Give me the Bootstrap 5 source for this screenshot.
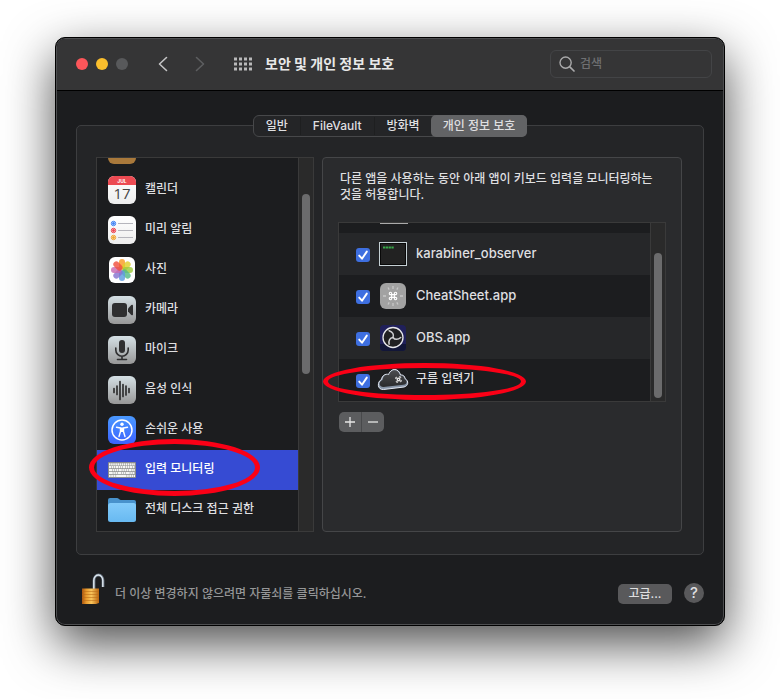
<!DOCTYPE html>
<html lang="ko">
<head>
<meta charset="utf-8">
<meta name="viewport" content="width=device-width, initial-scale=1">
<title>보안 및 개인 정보 보호</title>
<link href="https://cdn.jsdelivr.net/npm/bootstrap@5.3.0/dist/css/bootstrap.min.css" rel="stylesheet">
<style>
  body { font-family: Inter, "Noto Sans CJK KR", sans-serif; font-size: 12px; line-height: 16px; font-weight: 500; color: #dfdfe0; background: #fff; padding: 37px 55px 32px; min-height: 100vh; }
  button, input { font: inherit; }
  svg { display: block; flex: none; }
  .prefs-window { background: #1c1d1f; border: 1px solid #000; border-radius: 10px; box-shadow: inset 0 0 0 1px #4d4e50, 0 18px 50px rgba(0,0,0,.7); padding: 1px; }
  .title-bar { height: 52px; background: #353536; border-bottom: 1px solid #000; border-radius: 8px 8px 0 0; padding: 0 11px 2px 19px; }
  .title-bar h1 { font-size: 14px; line-height: 20px; font-weight: 700; margin: 0 0 0 13px; color: #e8e8e8; }
  .plain-btn { background: none; border: 0; padding: 0; color: inherit; }
  .dot { width: 12px; height: 12px; border-radius: 50%; }
  .dot-red { background: #fc565a; } .dot-yellow { background: #fbbf2d; } .dot-gray { background: #58595b; }
  .nav-btn { width: 37px; height: 28px; display: flex; align-items: center; justify-content: center; }
  .search-box { width: 162px; height: 28px; border: 1px solid #434446; border-radius: 6px; padding: 0 8px; gap: 5px; }
  .search-box input { background: none; border: 0; outline: 0; padding: 0; min-width: 0; color: #ddd; }
  .search-box input::placeholder { color: #6f7072; opacity: 1; }
  .pane { padding: 24px 19px 19px; }
  .segments { position: relative; z-index: 1; height: 22px; margin-bottom: -12px; background: #242527; border: 1px solid #47484a; border-radius: 6px; }
  .segments button { padding: 0 12px; border-right: 1px solid #1e1f20; line-height: 18px; margin: 1px 0; }
  .segments button:last-child, .segments button.before-active { border-right: 0; }
  .segments button.selected { background: #626365; border-radius: 5px; margin: -1px; line-height: 20px; }
  .group-box { background: #242527; border: 1px solid #3d3e40; border-radius: 5px; padding: 31px 21px 22px 19px; gap: 8px; }
  .category-list { width: 218px; }
  .scroll-frame { border: 1px solid #3a3a3a; background: #1c1d1f; }
  .category-view { height: 373px; padding-bottom: 1px; }
  .category { height: 40px; flex: none; padding: 0 11px; gap: 9px; color: inherit; text-decoration: none; }
  .category span, .app-row label { padding-bottom: 2px; }
  .category.selected { background: #364bd3; color: #fff; }
  .track { width: 15px; background: #2a2a2a; border-left: 1px solid #3a3a3a; padding: 0 3px; }
  .thumb { width: 8px; border-radius: 4px; background: #6b6b6c; }
  .category-thumb { height: 180px; margin-top: 36px; }
  .app-thumb { height: 145px; margin-top: 30px; }
  .detail { min-width: 0; background: #2a2b2d; border: 1px solid #454648; border-radius: 4px; padding: 13px 15px 16px; }
  .detail p { margin: 0 1px 19px 2px; }
  .app-view { height: 178px; }
  .app-row { height: 42px; flex: none; padding-left: 17px; gap: 9px; }
  .app-row:nth-child(even) { background: #262729; }
  .app-row label { font-size: 13px; }
  .app-row label.hangul { font-size: 12px; }
  .app-row input { appearance: none; width: 14px; height: 14px; margin: 1px 0 0; border-radius: 3px; background: #4a4b4d; flex: none; }
  .app-row input:checked { background: #3e6fe0 url("data:image/svg+xml,%3Csvg xmlns='http://www.w3.org/2000/svg' viewBox='0 0 14 14'%3E%3Cpath d='M3.2 7.6 6 10.7 10.8 3.6' fill='none' stroke='white' stroke-width='1.9' stroke-linecap='round' stroke-linejoin='round'/%3E%3C/svg%3E"); }
  .edit-btns { margin: 10px 0 0 1px; height: 20px; background: #5c5d5f; border-radius: 5px; }
  .edit-btns button { width: 22px; display: flex; align-items: center; justify-content: center; }
  .edit-btns button + button { border-left: 1px solid #48494b; width: 23px; }
  .mark-ring { position: absolute; pointer-events: none; border: 5px solid #fb0016; border-radius: 50%; }
  .ring-category { left: -7px; right: 54px; bottom: 36px; height: 57px; }
  .ring-app { left: -15px; width: 203px; bottom: 2px; height: 37px; }
  .footer-row { margin-top: 18px; padding-left: 5px; }
  .footer-text { color: #959697; margin: 10px 0 0 10px; }
  .advanced { background: #59595b; border-radius: 5px; height: 20px; width: 54px; margin: 9px 12px 0 0; line-height: 18px; }
  .help { width: 20px; height: 20px; border-radius: 50%; background: #59595b; font-size: 15px; line-height: 20px; margin-top: 8px; }
</style>
<script src="https://cdn.jsdelivr.net/npm/bootstrap@5.3.0/dist/js/bootstrap.bundle.min.js"></script>
</head>
<body>
<svg width="0" height="0" class="position-absolute" aria-hidden="true">
  <defs>
    <linearGradient id="silver" x1="0" y1="0" x2="0" y2="1"><stop stop-color="#d5e0e5"/><stop offset="1" stop-color="#979797"/></linearGradient>
    <linearGradient id="paper" x1="0" y1="0" x2="0" y2="1"><stop stop-color="#fff"/><stop offset="1" stop-color="#ededed"/></linearGradient>
    <linearGradient id="blue" x1="0" y1="0" x2="0" y2="1"><stop stop-color="#4a99ff"/><stop offset="1" stop-color="#3c62ff"/></linearGradient>
    <linearGradient id="folder" x1="0" y1="0" x2="0" y2="1"><stop stop-color="#83cbfa"/><stop offset="1" stop-color="#68b9f1"/></linearGradient>
    <linearGradient id="gold" x1="0" y1="0" x2="1" y2="0"><stop stop-color="#a85410"/><stop offset=".25" stop-color="#e89a2c"/><stop offset=".55" stop-color="#f9c45b"/><stop offset="1" stop-color="#b9640f"/></linearGradient>
    <linearGradient id="cloudFill" x1="0" y1="0" x2="0" y2="1"><stop stop-color="#4b4c4f"/><stop offset="1" stop-color="#292a2c"/></linearGradient>
    <path id="cmd" d="M-1.6-1.6h3.2v3.2h-3.2zM-1.6-1.6h-1.4a1.4 1.4 0 1 1 1.4-1.4zM1.6-1.6v-1.4a1.4 1.4 0 1 1 1.4 1.4zM1.6 1.6h1.4a1.4 1.4 0 1 1-1.4 1.4zM-1.6 1.6v1.4a1.4 1.4 0 1 1-1.4-1.4z" fill="none"/>
    <path id="blade" d="M14 13.5c2-2.500 1-5.500-2-7.500" fill="none"/>
  </defs>
</svg>

<main class="prefs-window">
  <header class="title-bar d-flex align-items-center">
    <div class="d-flex gap-2">
      <button class="plain-btn dot dot-red" aria-label="닫기"></button>
      <button class="plain-btn dot dot-yellow" aria-label="최소화"></button>
      <button class="plain-btn dot dot-gray" aria-label="확대" disabled></button>
    </div>
    <div class="d-flex ms-3 me-3">
      <button class="plain-btn nav-btn" aria-label="뒤로"><svg width="11" height="16" viewBox="0 0 11 16"><path d="M9.500 1.500 2.500 8 9.500 14.500" fill="none" stroke="#c4c4c5" stroke-width="1.600" stroke-linecap="round" stroke-linejoin="round"/></svg></button>
      <button class="plain-btn nav-btn" aria-label="앞으로" disabled><svg width="11" height="16" viewBox="0 0 11 16"><path d="M2.500 1.500 9.500 8 2.500 14.500" fill="none" stroke="#5d5e60" stroke-width="1.600" stroke-linecap="round" stroke-linejoin="round"/></svg></button>
    </div>
    <button class="plain-btn" aria-label="모두 보기"><svg width="18" height="14" viewBox="0 0 18 14"><path d="M0 2h18M0 7h18M0 12h18" stroke="#b9b9ba" stroke-width="3" stroke-dasharray="3 2"/></svg></button>
    <h1>보안 및 개인 정보 보호</h1>
    <div class="search-box d-flex align-items-center ms-auto">
      <svg width="16" height="16" viewBox="0 0 16 16"><circle cx="6.6" cy="6.6" r="5.6" fill="none" stroke="#aaaaab" stroke-width="1.4"/><path d="m10.8 10.8 4.2 4.2" stroke="#aaaaab" stroke-width="1.7" stroke-linecap="round"/></svg>
      <input class="flex-grow-1" type="text" placeholder="검색" aria-label="검색">
    </div>
  </header>

  <div class="pane">
    <div class="d-flex justify-content-center">
      <div class="segments d-flex" role="tablist">
        <button class="plain-btn" role="tab">일반</button>
        <button class="plain-btn" role="tab">FileVault</button>
        <button class="plain-btn before-active" role="tab">방화벽</button>
        <button class="plain-btn selected" role="tab" aria-selected="true">개인 정보 보호</button>
      </div>
    </div>

    <section class="group-box d-flex">
      <div class="category-list position-relative flex-shrink-0">
        <div class="scroll-frame d-flex">
          <nav class="category-view flex-grow-1 d-flex flex-column justify-content-end overflow-hidden" aria-label="카테고리">
            <a href="#" class="category d-flex align-items-center" aria-label="연락처"><svg width="28" height="28"><rect width="28" height="28" rx="6" fill="#a9793b"/></svg></a>
            <a href="#" class="category d-flex align-items-center">
              <svg width="28" height="28" viewBox="0 0 28 28"><rect width="28" height="28" rx="6" fill="url(#paper)"/><path d="M0 9V6a6 6 0 0 1 6-6h16a6 6 0 0 1 6 6v3z" fill="#ec4a52"/><text x="14" y="7" text-anchor="middle" font-size="5" font-weight="700" fill="#fff">JUL</text><text x="14" y="23" text-anchor="middle" font-family="Open Sans" font-size="15" font-weight="400" fill="#444">17</text></svg>
              <span>캘린더</span></a>
            <a href="#" class="category d-flex align-items-center">
              <svg width="28" height="28" viewBox="0 0 28 28"><rect width="28" height="28" rx="6" fill="url(#paper)"/><path d="M10 7.5h15M10 14.5h15M10 21.5h15" stroke="#b5b5bc"/><g stroke-width="1" fill="none"><g stroke="#3c80f5"><circle cx="5.5" cy="7.5" r="2.2"/><circle cx="5.5" cy="7.5" r="1" fill="#3c80f5"/></g><g stroke="#ef3f4b"><circle cx="5.5" cy="14.5" r="2.2"/><circle cx="5.5" cy="14.5" r="1" fill="#ef3f4b"/></g><g stroke="#f2a229"><circle cx="5.5" cy="21.5" r="2.2"/><circle cx="5.5" cy="21.5" r="1" fill="#f2a229"/></g></g></svg>
              <span>미리 알림</span></a>
            <a href="#" class="category d-flex align-items-center">
              <svg width="28" height="28" viewBox="0 0 28 28"><rect x="1" y="1" width="26" height="26" rx="6" fill="#fff"/><g fill-opacity=".82"><rect x="11" y="3" width="6" height="10.5" rx="3" fill="#f99b25"/><rect x="11" y="3" width="6" height="10.5" rx="3" fill="#dfd02d" transform="rotate(45 14 14)"/><rect x="11" y="3" width="6" height="10.5" rx="3" fill="#9dca3c" transform="rotate(90 14 14)"/><rect x="11" y="3" width="6" height="10.5" rx="3" fill="#55bb86" transform="rotate(135 14 14)"/><rect x="11" y="3" width="6" height="10.5" rx="3" fill="#5d9ce0" transform="rotate(180 14 14)"/><rect x="11" y="3" width="6" height="10.5" rx="3" fill="#8675cf" transform="rotate(225 14 14)"/><rect x="11" y="3" width="6" height="10.5" rx="3" fill="#c86bb2" transform="rotate(270 14 14)"/><rect x="11" y="3" width="6" height="10.5" rx="3" fill="#f0503e" transform="rotate(315 14 14)"/></g></svg>
              <span>사진</span></a>
            <a href="#" class="category d-flex align-items-center">
              <svg width="28" height="28" viewBox="0 0 28 28"><rect width="28" height="28" rx="6" fill="url(#silver)"/><rect x="4" y="7" width="15" height="14" rx="3" fill="#2f2f30"/><path d="M20 12.5 23.3 9q1.7-1 1.7.8v8.4q0 1.800-1.700.800L20 15.500z" fill="#2f2f30"/></svg>
              <span>카메라</span></a>
            <a href="#" class="category d-flex align-items-center">
              <svg width="28" height="28" viewBox="0 0 28 28"><rect width="28" height="28" rx="6" fill="url(#silver)"/><rect x="11" y="4" width="6" height="13" rx="3" fill="#2f2f30"/><path d="M7.800 12v2a6.200 6.200 0 0 0 12.400 0v-2M14 20.500v3M9.500 23.500h9" fill="none" stroke="#2f2f30" stroke-width="1.600" stroke-linecap="round"/></svg>
              <span>마이크</span></a>
            <a href="#" class="category d-flex align-items-center">
              <svg width="28" height="28" viewBox="0 0 28 28"><rect width="28" height="28" rx="6" fill="url(#silver)"/><path d="M6 12.500v4M9 10v8.500M12 5.500v18M15 8.500v12M18 10v9M21 12.500v4" stroke="#2f2f30" stroke-width="1.700" stroke-linecap="round"/></svg>
              <span>음성 인식</span></a>
            <a href="#" class="category d-flex align-items-center">
              <svg width="28" height="28" viewBox="0 0 28 28"><rect width="28" height="28" rx="6" fill="url(#blue)"/><circle cx="14" cy="14" r="10" fill="none" stroke="#fff" stroke-width="1.500"/><circle cx="14" cy="8.300" r="1.700" fill="#fff"/><path d="M8.500 11.300 12.500 12v3.500L11 20.500M19.500 11.300 15.500 12v3.500L17 20.500" fill="none" stroke="#fff" stroke-width="1.400" stroke-linecap="round" stroke-linejoin="round"/><path d="M12.300 11.500h3.400v4.500h-3.400z" fill="#fff"/></svg>
              <span>손쉬운 사용</span></a>
            <a href="#" class="category selected d-flex align-items-center" aria-current="true">
              <svg width="28" height="28" viewBox="0 0 28 28"><rect y="6" width="28" height="16" rx="1" fill="#8b8c8c"/><g stroke="#f6f6f4" stroke-width="2.200" fill="none"><path d="M1 8.300h26" stroke-dasharray="1.600 .500"/><path d="M1 11.200h26" stroke-dasharray="2.500 .500 1.500 .500 1.500 .500"/><path d="M1 14.100h26" stroke-dasharray="3 .500 1.600 .500 1.600 .500 1.600 .500"/><path d="M1 17h26" stroke-dasharray="3.800 .500 1.600 .500 1.600 .500"/><path d="M1 19.900h26" stroke-dasharray="1.700 .500 1.700 .500 2.200 .500 10.500 .500 1.700 .500 1.700 .500 2 .500"/></g></svg>
              <span>입력 모니터링</span></a>
            <a href="#" class="category d-flex align-items-center">
              <svg width="28" height="28" viewBox="0 0 28 28"><path d="M0 10V4q0-2 2-2h7q1 0 2 1t2 1h13q2 0 2 2v6H0z" fill="#4892cc"/><rect y="7" width="28" height="19" rx="2.500" fill="url(#folder)"/></svg>
              <span>전체 디스크 접근 권한</span></a>
          </nav>
          <div class="track"><div class="thumb category-thumb"></div></div>
        </div>
        <div class="mark-ring ring-category"></div>
      </div>

      <div class="detail flex-grow-1">
        <p>다른 앱을 사용하는 동안 아래 앱이 키보드 입력을 모니터링하는 것을 허용합니다.</p>
        <div class="position-relative">
          <div class="scroll-frame d-flex">
            <div class="app-view flex-grow-1 d-flex flex-column justify-content-end overflow-hidden">
              <div class="app-row d-flex align-items-center"><svg class="ms-4" width="28" height="42"><path d="M0 32.500h28" stroke="#aaa"/></svg></div>
              <div class="app-row d-flex align-items-center">
                <input type="checkbox" id="app1" checked>
                <svg width="28" height="28" viewBox="0 0 28 28"><rect x=".500" y="2.500" width="27" height="23" fill="#222" stroke="#c5d0d4"/><rect x="1.500" y="3.500" width="25" height="21" fill="none" stroke="#080808"/><path d="M4 7.500h11" stroke="#38a849" stroke-width="2.200" stroke-dasharray="2.300 .500"/></svg>
                <label for="app1">karabiner_observer</label>
              </div>
              <div class="app-row d-flex align-items-center">
                <input type="checkbox" id="app2" checked>
                <svg width="28" height="28" viewBox="0 0 28 28"><rect x="1" y="1" width="26" height="26" rx="6" fill="#a2a2a2"/><path d="M14 4v3M14 21v3M4 14h3M21 14h3M9 5.500l1.200 2.100M19 5.500l-1.200 2.100M9 22.500l1.200-2.100M19 22.500l-1.200-2.100" stroke="#c8c8c8" stroke-width="1.300"/><use href="#cmd" transform="translate(14 14) scale(.850)" stroke="#fff" stroke-width="1.300"/></svg>
                <label for="app2">CheatSheet.app</label>
              </div>
              <div class="app-row d-flex align-items-center">
                <input type="checkbox" id="app3" checked>
                <svg width="28" height="28" viewBox="0 0 28 28"><rect x="1" y="1" width="26" height="26" rx="4" fill="#20205a"/><path d="M1 20h26v3a4 4 0 0 1-4 4H5a4 4 0 0 1-4-4z" fill="#121638"/><circle cx="14" cy="13.500" r="10" fill="#202022" stroke="#e7e7ea" stroke-width="1.300"/><g stroke="#cfcfd2" stroke-width="1.500" stroke-linecap="round"><use href="#blade" transform="rotate(-15 14 13.500)"/><use href="#blade" transform="rotate(105 14 13.500)"/><use href="#blade" transform="rotate(225 14 13.500)"/></g></svg>
                <label for="app3">OBS.app</label>
              </div>
              <div class="app-row d-flex align-items-center">
                <input type="checkbox" id="app4" checked>
                <svg width="28" height="28" viewBox="0 0 28 28" overflow="visible"><path d="M4.500 23.500C-2 24-2 15.500 2.500 13.500 3 9.500 6.500 7.500 9.500 8.500 12 1.500 20 2 21.500 9 24 8.500 26 10.500 26 12.500 30 15 29.500 20 25 21z" fill="#8795a8" stroke="#e4e9f4" stroke-width="1"/><path d="M4.500 21C-.500 21-.500 15.500 3.500 14 4 9.500 7 8 10 9 12 2.500 19.500 3 21 9.500 23.500 9 25.500 11 25.500 13 29 15 28 18.300 24.500 18.800z" fill="url(#cloudFill)"/><use href="#cmd" transform="translate(19.500 13.500) rotate(-12) scale(.600)" stroke="#fff" stroke-width="1.300"/></svg>
                <label for="app4" class="hangul">구름 입력기</label>
              </div>
            </div>
            <div class="track"><div class="thumb app-thumb"></div></div>
          </div>
          <div class="mark-ring ring-app"></div>
        </div>
        <div class="edit-btns d-inline-flex">
          <button class="plain-btn" aria-label="추가"><svg width="12" height="12"><path d="M1 6h10M6 1v10" stroke="#e6e6e6" stroke-width="1.300"/></svg></button>
          <button class="plain-btn" aria-label="제거"><svg width="12" height="12"><path d="M1 6h10" stroke="#e6e6e6" stroke-width="1.300"/></svg></button>
        </div>
      </div>
    </section>

    <footer class="footer-row d-flex align-items-center">
      <button class="plain-btn" aria-label="자물쇠"><svg width="24" height="32" viewBox="0 0 24 32"><path d="M13 16V7.500a4.500 5.500 0 0 1 9 0V14" fill="none" stroke="#66727f" stroke-width="2.800"/><path d="M12.800 16V7.500a4.500 5.500 0 0 1 9 0V14" fill="none" stroke="#dfe8f0" stroke-width="1.400"/><path d="M1 15.500h17v14.500l-3 1H1z" fill="url(#gold)"/><path d="M1 18.500h17M1 21.500h17M1 24.500h17M1 27.500h17" stroke="#b96a16" stroke-opacity=".55"/></svg></button>
      <span class="footer-text">더 이상 변경하지 않으려면 자물쇠를 클릭하십시오.</span>
      <button class="plain-btn advanced ms-auto">고급...</button>
      <button class="plain-btn help" aria-label="도움말">?</button>
    </footer>
  </div>
</main>
</body>
</html>
